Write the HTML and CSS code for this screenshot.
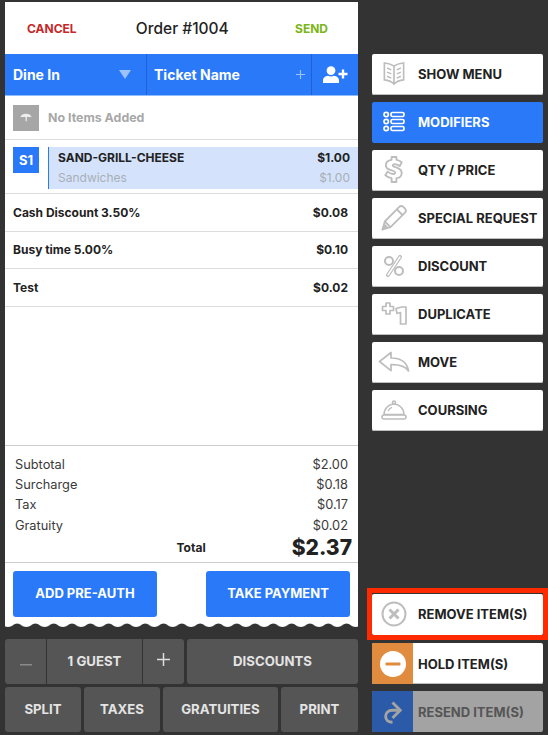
FILE: index.html
```html
<!DOCTYPE html>
<html lang="en">
<head>
    <meta charset="UTF-8">
    <meta name="viewport" content="width=device-width, initial-scale=1.0">
    <title>Order #1004</title>
    <link rel="stylesheet" href="styles.css">
</head>
<body>
    <div class="order-side">
        <div class="ticket">
            <div class="ticket-head">
                <span class="cancel">CANCEL</span>
                <span class="order-title">Order #1004</span>
                <span class="send">SEND</span>
            </div>
            <div class="blue-bar">
                <div class="bar-cell dine">
                    <span>Dine In</span>
                    <svg width="12" height="9" viewBox="0 0 12 9"><path d="M0 0h12L6 9z" fill="#9cc2fb"/></svg>
                </div>
                <div class="bar-cell name">
                    <span>Ticket Name</span>
                    <svg width="9" height="9" viewBox="0 0 9 9"><path d="M4.500 0v9M0 4.500h9" stroke="#9cc2fb" stroke-width="1.200"/></svg>
                </div>
                <div class="bar-cell guest-add">
                    <svg width="25" height="17" viewBox="0 0 25 17">
                        <circle cx="8" cy="4.600" r="4.400" fill="#fff"/>
                        <path d="M0 17v-2.500c0-3 2.500-4.500 5-4.800 1.800 1 4.200 1 6 0 2.500.3 5 1.800 5 4.800V17z" fill="#fff"/>
                        <path d="M20 3.500v9M15.500 8h9" stroke="#fff" stroke-width="2.400"/>
                    </svg>
                </div>
            </div>
            <div class="no-items">
                <div class="seat-box grey">
                    <svg width="12" height="10" viewBox="0 0 14 12"><path d="M0 5C1 2 4 .8 7 .8S13 2 14 5c-1-.8-2-.8-3 0-1-.8-2-.8-3 0v5H6.500V5c-1-.8-2.500-.8-3.500 0-1-.8-2-.8-3 0z" fill="#eee"/></svg>
                </div>
                <span>No Items Added</span>
            </div>
            <div class="seat-row">
                <div class="seat-box">S1</div>
                <div class="item">
                    <div class="item-line main"><span>SAND-GRILL-CHEESE</span><span>$1.00</span></div>
                    <div class="item-line sub"><span>Sandwiches</span><span>$1.00</span></div>
                </div>
            </div>
            <div class="charge"><span>Cash Discount 3.50%</span><span>$0.08</span></div>
            <div class="charge"><span>Busy time 5.00%</span><span>$0.10</span></div>
            <div class="charge"><span>Test</span><span>$0.02</span></div>
            <div class="filler"></div>
            <div class="totals">
                <div class="total-line"><span>Subtotal</span><span>$2.00</span></div>
                <div class="total-line"><span>Surcharge</span><span>$0.18</span></div>
                <div class="total-line"><span>Tax</span><span>$0.17</span></div>
                <div class="total-line"><span>Gratuity</span><span>$0.02</span></div>
                <div class="grand"><span class="grand-label">Total</span><span class="grand-value">$2.37</span></div>
            </div>
            <div class="pay-row">
                <button class="pay-btn">ADD PRE-AUTH</button>
                <button class="pay-btn">TAKE PAYMENT</button>
            </div>
            <svg class="tear" width="353" height="5" viewBox="0 0 353 5">
                <defs>
                    <pattern id="scallop" width="18.300" height="5" patternUnits="userSpaceOnUse" x="3">
                        <path d="M0 4C4 4 6 .5 9.150 .5S14.300 4 18.300 4V5H0z" fill="#333"/>
                    </pattern>
                </defs>
                <rect width="353" height="5" fill="url(#scallop)"/>
            </svg>
        </div>
        <div class="tools">
            <div class="tool-row top">
                <div class="stepper">
                    <button class="step dim">
                        <svg width="12" height="2" viewBox="0 0 12 2"><rect width="12" height="1.500" fill="#8a8a8a"/></svg>
                    </button>
                    <button class="step guests">1 GUEST</button>
                    <button class="step">
                        <svg width="13" height="13" viewBox="0 0 13 13"><path d="M6.500 0v13M0 6.500h13" stroke="#ddd" stroke-width="1.500"/></svg>
                    </button>
                </div>
                <button class="tool discounts">DISCOUNTS</button>
            </div>
            <div class="tool-row">
                <button class="tool split">SPLIT</button>
                <button class="tool taxes">TAXES</button>
                <button class="tool gratuities">GRATUITIES</button>
                <button class="tool print">PRINT</button>
            </div>
        </div>
    </div>

    <div class="action-side">
        <div class="action-list">
            <button class="action">
                <span class="action-icon">
                    <svg width="22" height="25" viewBox="0 0 24 26" fill="none" stroke="#bdbdbd" stroke-width="1.800">
                        <path d="M12 5C9 2.500 5 1.800 1.500 1.500v18.500c4 .3 7.500 1.500 10.500 4.500 3-3 6.500-4.200 10.500-4.500V1.500C19 1.800 15 2.500 12 5zM12 5v19"/>
                        <path d="M4.500 7l4.500 2M4.500 11.500l4.500 2M4.500 16l4.500 2M19.500 7l-4.500 2M19.500 11.500l-4.500 2M19.500 16l-4.500 2" stroke-width="1.500"/>
                    </svg>
                </span>
                SHOW MENU
            </button>
            <button class="action active">
                <span class="action-icon">
                    <svg width="22" height="21" viewBox="0 0 22 21" fill="none" stroke="#fff" stroke-width="1.700">
                        <circle cx="3.200" cy="3.500" r="2.200"/><circle cx="3.200" cy="10.500" r="2.200"/><circle cx="3.200" cy="17.500" r="2.200"/>
                        <rect x="8" y="1.500" width="13" height="4" rx="1.500"/><rect x="8" y="8.500" width="13" height="4" rx="1.500"/><rect x="8" y="15.500" width="13" height="4" rx="1.500"/>
                    </svg>
                </span>
                MODIFIERS
            </button>
            <button class="action">
                <span class="action-icon">
                    <svg width="20" height="27" viewBox="0 0 20 28" fill="none" stroke="#bdbdbd" stroke-width="1.900" stroke-linejoin="round">
                        <path d="M7.500 1h5v3c2.500.4 4.500 1.500 5.500 2.500l-2 4c-1.500-1-3.500-2-5.500-2-2 0-2.500 1.800-.5 2.500l3 1c3 1.200 5 2.800 5 5.500s-2 5-5.500 5.500v4h-5v-4c-2.500-.4-5-1.700-6.500-3l2.300-3.800c1.700 1.300 4 2.500 6 2.500 2.200 0 2.800-2 .7-2.900l-3-1.100C3 13.900 1.500 12.300 1.500 9.700c0-2.800 2.300-5 6-5.600z"/>
                    </svg>
                </span>
                QTY / PRICE
            </button>
            <button class="action">
                <span class="action-icon">
                    <svg width="26" height="26" viewBox="0 0 26 26" fill="none" stroke="#bdbdbd" stroke-width="1.800" stroke-linejoin="round">
                        <path d="M1.500 24.500l2.300-8L18 2.200c1.300-1.300 3.200-1.300 4.500-.1l1.300 1.300c1.300 1.300 1.300 3.200 0 4.500L9.500 22.200z"/>
                        <path d="M16 4.500l5.500 5.500M3.800 16.500l5.700 5.700"/>
                        <path d="M1.500 24.500l2.300-4.500 2.200 2.300z" fill="#bdbdbd"/>
                    </svg>
                </span>
                SPECIAL REQUEST
            </button>
            <button class="action">
                <span class="action-icon">
                    <svg width="22" height="22" viewBox="0 0 22 22" fill="none">
                        <path d="M17 2L5 20" stroke="#bdbdbd" stroke-width="4" stroke-linecap="round"/>
                        <path d="M17 2L5 20" stroke="#fff" stroke-width="1.500" stroke-linecap="round"/>
                        <circle cx="6" cy="6" r="4" stroke="#bdbdbd" stroke-width="2"/>
                        <circle cx="16" cy="16" r="4" stroke="#bdbdbd" stroke-width="2"/>
                    </svg>
                </span>
                DISCOUNT
            </button>
            <button class="action">
                <span class="action-icon">
                    <svg width="26" height="23" viewBox="0 0 26 23" fill="none" stroke="#bdbdbd" stroke-width="1.700" stroke-linejoin="round">
                        <path d="M5 1h4v3.500h3.500v4H9V12H5V8.500H1.500v-4H5z"/>
                        <path d="M15 6.500l5.500-1.500H25v17h-5.500V10.500L16 11.500z"/>
                    </svg>
                </span>
                DUPLICATE
            </button>
            <button class="action">
                <span class="action-icon">
                    <svg width="32" height="21" viewBox="0 0 32 21" fill="none" stroke="#bdbdbd" stroke-width="1.700" stroke-linejoin="round">
                        <path d="M1.500 10.500L13 1.500v5.500c9 0 16 4 17.500 13-3-4.500-9-6.500-17.500-6.300v6z"/>
                    </svg>
                </span>
                MOVE
            </button>
            <button class="action">
                <span class="action-icon">
                    <svg width="26" height="20" viewBox="0 0 26 20" fill="none" stroke="#bdbdbd" stroke-width="1.600">
                        <circle cx="13" cy="2.500" r="1.500"/>
                        <path d="M3 14.500C3 8.500 8 4 13 4s10 4.500 10 10.500z"/>
                        <path d="M7 11c.8-1.800 2.300-3 4-3.600" stroke-width="1.300"/>
                        <rect x="1" y="15" width="24" height="4" rx="2"/>
                    </svg>
                </span>
                COURSING
            </button>
        </div>
        <div class="action-foot">
            <div class="highlight">
                <button class="action">
                    <span class="action-icon">
                        <svg width="26" height="26" viewBox="0 0 26 26" fill="none" stroke="#bdbdbd">
                            <circle cx="13" cy="13" r="11.500" stroke-width="2"/>
                            <path d="M8.500 8.500l9 9M17.500 8.500l-9 9" stroke-width="3"/>
                        </svg>
                    </span>
                    REMOVE ITEM(S)
                </button>
            </div>
            <button class="action split-action">
                <span class="square orange">
                    <svg width="26" height="26" viewBox="0 0 26 26"><circle cx="13" cy="13" r="13" fill="#fff"/><rect x="5.500" y="11.500" width="15" height="3" rx="1" fill="#e08b3e"/></svg>
                </span>
                HOLD ITEM(S)
            </button>
            <button class="action split-action disabled">
                <span class="square navy">
                    <svg width="21" height="24" viewBox="0 0 22 28" fill="none" stroke="#a3a3a3" stroke-width="3.400">
                        <path d="M19 12H11C6 12 3 15 3 19s3 7 8 7"/>
                        <path d="M11 3l9 9-9 9"/>
                    </svg>
                </span>
                RESEND ITEM(S)
            </button>
        </div>
    </div>
</body>
</html>
```

FILE: styles.css
```css
* {
    box-sizing: border-box;
}
html, body {
    height: 100%;
}
body {
    margin: 0;
    width: 548px;
    height: 735px;
    overflow: hidden;
    display: flex;
    font-family: 'Inter', sans-serif;
    background-color: #333333;
    color: #222222;
}
button {
    font-family: inherit;
    border: none;
    padding: 0;
    cursor: pointer;
}

/* left side */
.order-side {
    width: 353px;
    margin-left: 5px;
    padding-top: 2px;
    display: flex;
    flex-direction: column;
}
.ticket {
    height: 626px;
    background-color: #ffffff;
    display: flex;
    flex-direction: column;
}
.ticket-head {
    height: 52px;
    flex: none;
    display: flex;
    align-items: center;
    justify-content: space-between;
    padding: 0 30px 0 22px;
}
.cancel {
    color: #c62828;
    font-size: 12px;
    font-weight: 700;
}
.send {
    color: #7cb518;
    font-size: 12px;
    font-weight: 700;
}
.order-title {
    font-size: 15.500px;
    font-weight: 500;
    margin-right: 7px;
}
.blue-bar {
    height: 42px;
    flex: none;
    display: flex;
    background-color: #2979f8;
    border-bottom: 1px solid #8fbcfb;
    color: #ffffff;
    font-size: 14px;
    font-weight: 700;
}
.bar-cell {
    display: flex;
    align-items: center;
    justify-content: space-between;
    border-right: 1px solid #1a62d6;
}
.dine {
    width: 142px;
    padding: 0 15px 0 8px;
}
.name {
    width: 165px;
    padding: 0 6px 0 7px;
}
.guest-add {
    flex: 1;
    border-right: none;
    padding: 0 0 0 11px;
}
.no-items {
    height: 44px;
    flex: none;
    display: flex;
    align-items: center;
    gap: 9px;
    padding-left: 8px;
    border-bottom: 1px solid #dddddd;
    color: #a8a8a8;
    font-size: 12.400px;
    font-weight: 700;
}
.seat-box {
    width: 26px;
    height: 26px;
    flex: none;
    display: flex;
    align-items: center;
    justify-content: center;
    background-color: #2979f8;
    color: #ffffff;
    font-size: 13px;
    font-weight: 700;
}
.seat-box.grey {
    background-color: #a6a6a6;
}
.seat-row {
    height: 54px;
    flex: none;
    display: flex;
    gap: 9px;
    padding: 7px 0 0 8px;
    border-bottom: 1px solid #dddddd;
}
.item {
    flex: 1;
    height: 42px;
    padding: 0 8px 0 9px;
    background-color: #d4e3fb;
    border-left: 1px solid #2979f8;
}
.item-line {
    height: 20px;
    display: flex;
    align-items: center;
    justify-content: space-between;
}
.item-line.main {
    font-size: 12px;
    font-weight: 700;
}
.item-line.sub {
    color: #a9aeb6;
    font-size: 12px;
}
.charge {
    height: 37.500px;
    flex: none;
    display: flex;
    align-items: center;
    justify-content: space-between;
    padding: 0 10px 0 8px;
    border-bottom: 1px solid #dddddd;
    font-size: 12px;
    font-weight: 700;
}
.filler {
    flex: 1;
    border-bottom: 1px solid #cccccc;
}
.totals {
    height: 117px;
    flex: none;
    padding: 8px 10px 0 10px;
    border-bottom: 1px solid #cccccc;
    font-size: 12.800px;
    color: #3a3a3a;
}
.total-line {
    height: 20.300px;
    display: flex;
    align-items: center;
    justify-content: space-between;
}
.grand {
    display: flex;
    align-items: center;
    justify-content: flex-end;
    height: 24px;
    margin-right: -4px;
    color: #222222;
    font-weight: 700;
}
.grand-label {
    font-size: 12px;
    margin-right: 86px;
}
.grand-value {
    font-size: 21px;
    font-weight: 800;
}
.pay-row {
    height: 60px;
    flex: none;
    display: flex;
    justify-content: space-between;
    padding: 8px 8px 0 8px;
}
.pay-btn {
    width: 144px;
    height: 46px;
    padding-bottom: 2px;
    border-radius: 3px;
    background-color: #2979f8;
    color: #ffffff;
    font-size: 13px;
    font-weight: 700;
}
.tear {
    display: block;
    flex: none;
}
.tools {
    margin-top: 11px;
    display: flex;
    flex-direction: column;
    gap: 3px;
}
.tool-row {
    display: flex;
    gap: 3px;
    height: 45px;
}
.stepper {
    width: 179px;
    display: flex;
    gap: 1px;
}
.step, .tool {
    height: 45px;
    padding-bottom: 2px;
    background-color: #555555;
    color: #e4e4e4;
    font-size: 13.200px;
    font-weight: 700;
    border-radius: 3px;
}
.step {
    width: 41px;
    border-radius: 0;
}
.step:first-child {
    border-radius: 3px 0 0 3px;
}
.step:last-child {
    border-radius: 0 3px 3px 0;
}
.step.guests {
    flex: 1;
}
.discounts {
    flex: 1;
}
.split {
    width: 76px;
}
.taxes {
    width: 76px;
}
.gratuities {
    width: 115px;
}
.print {
    flex: 1;
}

/* right side */
.action-side {
    width: 190px;
    display: flex;
    flex-direction: column;
    justify-content: space-between;
    padding: 54px 5px 3px 14px;
}
.action-list {
    display: flex;
    flex-direction: column;
    gap: 7px;
}
.action {
    width: 171px;
    height: 41px;
    padding-bottom: 2px;
    display: flex;
    align-items: center;
    background-color: #ffffff;
    border-radius: 2px;
    box-shadow: inset 0 -1px 0 #bdbdbd;
    color: #222222;
    font-size: 13px;
    font-weight: 700;
    text-align: left;
    white-space: nowrap;
}
.action.active {
    background-color: #2979f8;
    box-shadow: none;
    color: #ffffff;
}
.action-icon {
    width: 46px;
    flex: none;
    display: flex;
    justify-content: center;
    padding-right: 2px;
}
.action-foot {
    display: flex;
    flex-direction: column;
    gap: 7px;
}
.highlight {
    flex: none;
    margin: 0 0 -4px -5px;
    width: 181px;
    height: 52px;
    padding-top: 1px;
    border: 5px solid #ff2a00;
}
.highlight .action {
    box-shadow: none;
}
.split-action {
    padding-bottom: 0;
    overflow: hidden;
}
.square {
    width: 41px;
    height: 41px;
    flex: none;
    margin-right: 5px;
    display: flex;
    align-items: center;
    justify-content: center;
}
.orange {
    background-color: #e08b3e;
}
.navy {
    background-color: #2a5aa8;
}
.action.disabled {
    background-color: #a3a3a3;
    box-shadow: none;
    color: #555555;
}
```
